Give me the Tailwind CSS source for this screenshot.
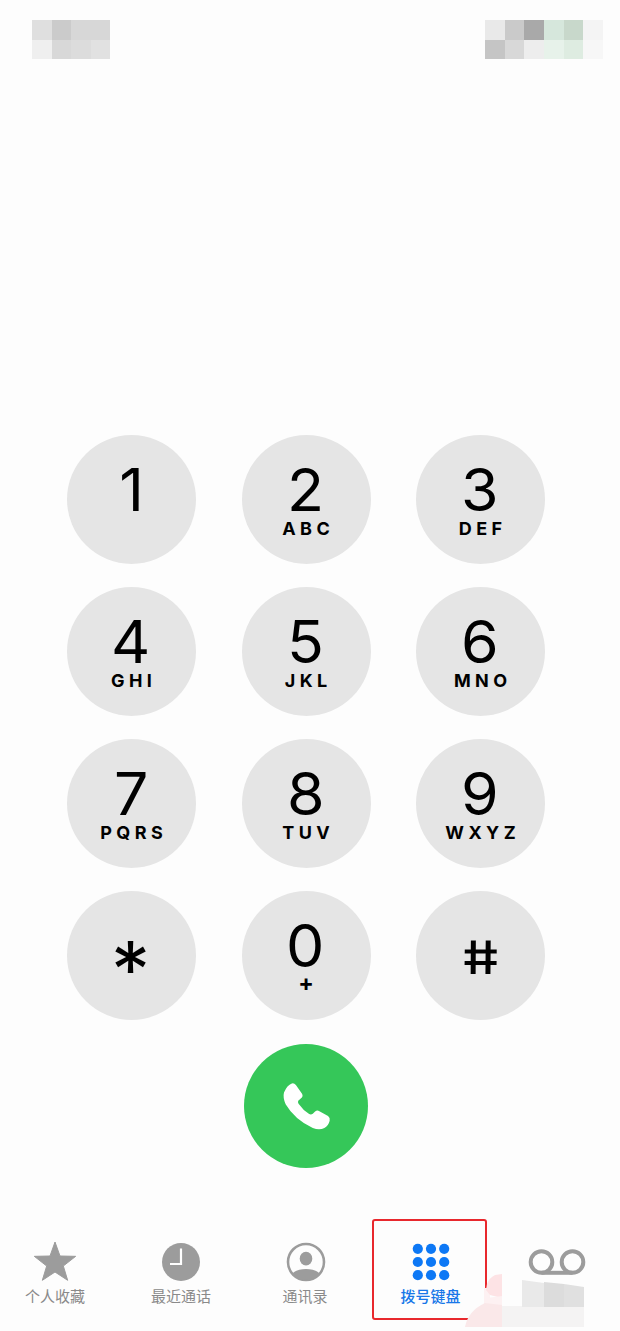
<!DOCTYPE html>
<html lang="zh-CN">
<head>
    <meta charset="UTF-8">
    <meta name="viewport" content="width=device-width, initial-scale=1.0">
    <title>拨号键盘</title>
    <script src="https://cdn.jsdelivr.net/npm/@tailwindcss/browser@4"></script>
</head>
<body class="bg-[#fdfdfd] text-black font-[Inter,'Noto_Sans_CJK_SC',sans-serif]">
    <div class="relative w-[620px] h-[1331px] overflow-hidden flex flex-col">
        <!-- Status bar -->
        <header class="h-[435px] shrink-0 pt-[20px] pl-[32px] pr-[17px] flex justify-between items-start">
            <div class="grid grid-cols-4 w-[78px] h-[39px]">
                <i class="bg-[#dfdfdf]"></i><i class="bg-[#cbcbcb]"></i><i class="bg-[#d7d7d7]"></i><i class="bg-[#d7d7d7]"></i>
                <i class="bg-[#efefef]"></i><i class="bg-[#d8d8d8]"></i><i class="bg-[#dcdcdc]"></i><i class="bg-[#e1e1e1]"></i>
            </div>
            <div class="grid grid-cols-6 w-[118px] h-[39px]">
                <i class="bg-[#e9e9e9]"></i><i class="bg-[#cacaca]"></i><i class="bg-[#a9a9a9]"></i><i class="bg-[#d6e7dc]"></i><i class="bg-[#c8d8cb]"></i><i class="bg-[#f4f4f4]"></i>
                <i class="bg-[#c5c5c5]"></i><i class="bg-[#d8d8d8]"></i><i class="bg-[#ededed]"></i><i class="bg-[#e7f2ea]"></i><i class="bg-[#deece1]"></i><i class="bg-[#f7f7f7]"></i>
            </div>
        </header>

        <!-- Keypad -->
        <main id="keypad" class="ml-[67px] w-[478px] grid grid-cols-[129px_129px_129px] justify-between gap-y-[23px]"></main>

        <!-- Call button -->
        <button class="mt-[24px] ml-[244px] size-[124px] shrink-0 rounded-full bg-[#35c759] flex items-center justify-center">
            <svg class="size-[49px]" viewBox="140 140 148 148" fill="#fff">
                <path d="M146 172Q155 150 168 145Q176 142 182 149L201 176Q204 182 200 187L189 197Q187 201 190 206Q204 226 222 237Q228 240 233 236L240 229Q246 224 253 228L279 243Q286 248 284 257Q280 273 268 279Q253 287 233 279Q178 253 151 207Q142 188 146 172Z"/>
            </svg>
        </button>

        <!-- Tab bar -->
        <nav class="mt-[51px] -ml-[8px] w-[628px] flex text-[15px] leading-[20px] text-[#8a8a8a]">
            <a class="w-[126px] shrink-0 pt-[21px] flex flex-col items-center">
                <svg class="w-[44px] h-[44px]" viewBox="100 28 132 132" fill="#9c9c9c">
                    <path d="M166 34L181 76L228 77L191 106L204 149L166 124L128 149L141 106L104 77L151 76Z" stroke="#9c9c9c" stroke-width="3" stroke-linejoin="round"/>
                </svg>
                <span class="mt-[3px]">个人收藏</span>
            </a>
            <a class="w-[126px] shrink-0 pt-[21px] flex flex-col items-center">
                <svg class="w-[44px] h-[44px]" viewBox="0 0 44 44" fill="none">
                    <circle cx="22" cy="22" r="19" fill="#9c9c9c"/>
                    <path d="M22 8.500V24H11" stroke="#fff" stroke-width="2.200"/>
                </svg>
                <span class="mt-[3px]">最近通话</span>
            </a>
            <a class="w-[123px] shrink-0 pt-[21px] flex flex-col items-center">
                <svg class="w-[44px] h-[44px]" viewBox="0 0 44 44" fill="#9c9c9c">
                    <circle cx="22" cy="22" r="18" fill="none" stroke="#9c9c9c" stroke-width="2.600"/>
                    <ellipse cx="22" cy="18.700" rx="6.300" ry="6.900"/>
                    <path d="M8.500 33.500C13 27.500 31 27.500 35.500 33.500Q30 40 22 40T8.500 33.500Z"/>
                </svg>
                <span class="mt-[3px] -ml-[1px]">通讯录</span>
            </a>
            <a class="ml-[5px] w-[115px] h-[101px] shrink-0 pt-[19px] pl-[2px] flex flex-col items-center border-2 border-[#e8282d] rounded-[3px] font-medium text-[#1877e8]">
                <svg class="w-[44px] h-[44px]" viewBox="0 0 44 44" fill="#0d78f5">
                    <circle cx="8.800" cy="8.800" r="5.100"/><circle cx="22" cy="8.800" r="5.100"/><circle cx="35.200" cy="8.800" r="5.100"/>
                    <circle cx="8.800" cy="22" r="5.100"/><circle cx="22" cy="22" r="5.100"/><circle cx="35.200" cy="22" r="5.100"/>
                    <circle cx="8.800" cy="35.200" r="5.100"/><circle cx="22" cy="35.200" r="5.100"/><circle cx="35.200" cy="35.200" r="5.100"/>
                </svg>
                <span class="mt-[3px]">拨号键盘</span>
            </a>
            <a class="ml-[5px] w-[130px] shrink-0 pt-[21px] flex flex-col items-center">
                <svg class="w-[60px] h-[44px]" viewBox="0 0 60 44" fill="none" stroke="#9c9c9c" stroke-width="4">
                    <circle cx="14.500" cy="22" r="10.800"/>
                    <circle cx="45.500" cy="22" r="10.800"/>
                    <path d="M14.500 32.800H45.500"/>
                </svg>
            </a>
        </nav>

        <!-- Mosaic over the corner -->
        <svg class="absolute left-[460px] top-[1270px] w-[160px] h-[61px]" viewBox="0 0 160 61">
            <path d="M24 34V18H30V34Z" fill="#fdf1f2"/>
            <path d="M27 14Q29 8 35 5L42 4V28L30 25L26 20Z" fill="#fde3e5"/>
            <path d="M27 28L42 26V37H27Z" fill="#fdf1f2"/>
            <path d="M42 36H124V57H42Z" fill="#f4f3f3"/>
            <path d="M5 57Q8 41 25 33L42 35V57Z" fill="#fae8e9"/>
            <path d="M62 10L84 13V37H62Z" fill="#e9e9e9"/>
            <path d="M84 12L104 14V37H84Z" fill="#dcdcdc"/>
            <path d="M104 14L124 17V37H104Z" fill="#e0e0e0"/>
        </svg>
    </div>

    <script>
        const keys = [
            ['1', ''], ['2', 'ABC'], ['3', 'DEF'],
            ['4', 'GHI'], ['5', 'JKL'], ['6', 'MNO'],
            ['7', 'PQRS'], ['8', 'TUV'], ['9', 'WXYZ'],
            ['*', ''], ['0', '+'], ['#', '']
        ];
        const keypad = document.getElementById('keypad');

        keys.forEach(([digit, letters]) => {
            const key = document.createElement('button');
            key.className = 'size-[129px] rounded-full bg-[#e5e5e5] flex flex-col items-center';
            if (digit === '*') {
                key.innerHTML = '<span class="pt-[31px] text-[78px] leading-[96px] -translate-x-[1px]">*</span>';
            } else if (digit === '#') {
                // skewed so that the bars stand upright
                key.innerHTML = '<span class="mt-[36px] text-[46px] leading-[60px] font-medium scale-x-[1.26] skew-x-[9deg]">#</span>';
            } else {
                const size = letters === '+'
                    ? 'text-[23px] leading-[16px] font-bold'
                    : 'text-[18px] leading-[20px] font-bold tracking-[4.400px] -mr-[4.400px]';
                key.innerHTML = `
                    <span class="pt-[25px] text-[59px] leading-[59px] -translate-x-[0.5px] scale-x-[1.03]">${digit}</span>
                    <span class="${size}">${letters}</span>
                `;
            }
            keypad.appendChild(key);
        });
    </script>
</body>
</html>
